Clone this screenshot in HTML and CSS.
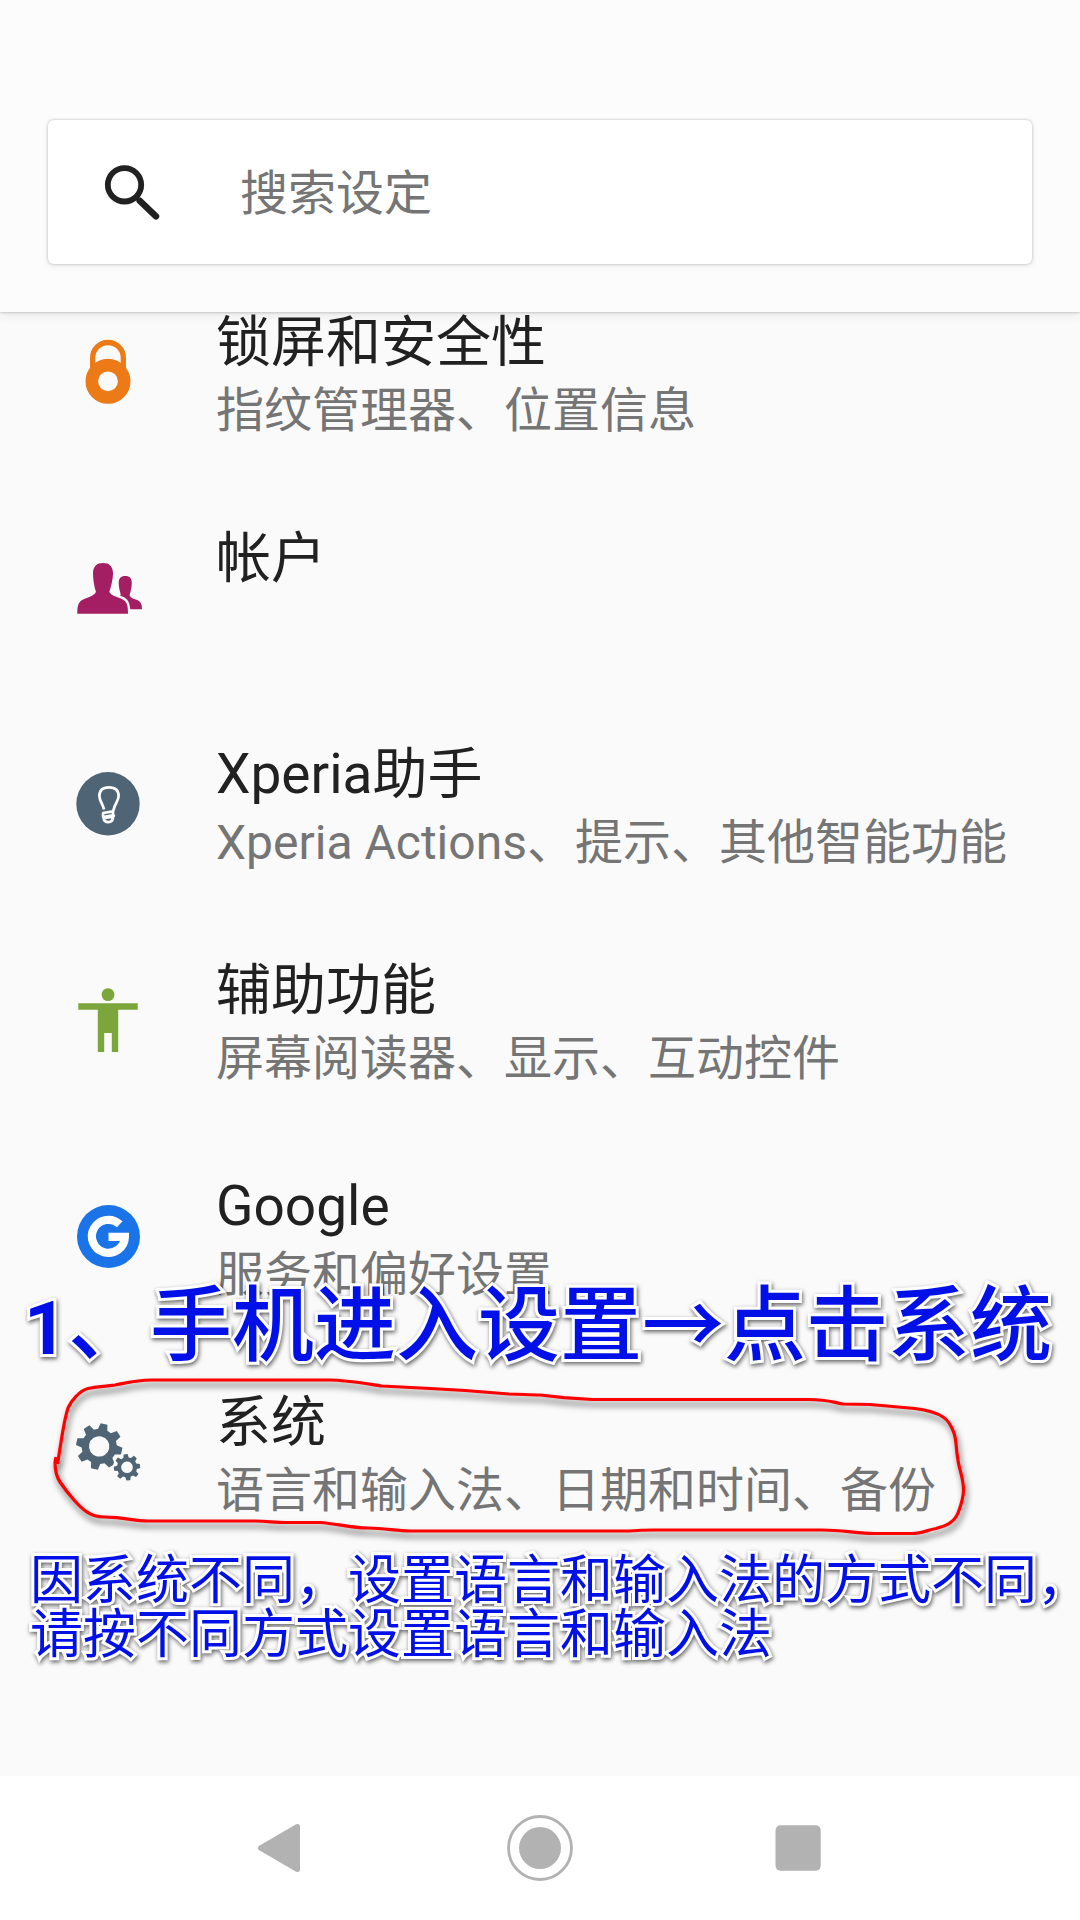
FILE: index.html
```html
<!DOCTYPE html>
<html lang="zh-CN">
<head>
<meta charset="utf-8">
<title>设置</title>
<link rel="stylesheet" href="styles.css">
</head>
<body>
<div class="screen">
  <header class="header">
    <div class="search">
      <svg class="search-icon" viewBox="0 0 60 60"><circle cx="22.5" cy="22.8" r="16.7" fill="none" stroke="#212121" stroke-width="5.8"/><path d="M37.6 38.6 54 54.4" stroke="#212121" stroke-width="6.4" stroke-linecap="round"/></svg>
      <span class="search-text">搜索设定</span>
    </div>
  </header>

  <main class="content">
    <ul class="list">
      <li class="row">
        <svg class="icon" viewBox="0 0 72 72"><path d="M20.7 36V21.5a15.3 15 0 0 1 30.6 0V36" fill="none" stroke="#ec7b17" stroke-width="5.3"/><circle cx="36" cy="45.3" r="16.2" fill="none" stroke="#ec7b17" stroke-width="12.6"/></svg>
        <div class="text"><div class="title">锁屏和安全性</div><div class="sub">指纹管理器、位置信息</div></div>
      </li>
      <li class="row">
        <svg class="icon" viewBox="0 0 72 72" fill="#a31e62"><path d="M5.3 61.7C5.3 52 7 48.7 14 46.3c5-1.800 8.500-3.300 10-6.200C22 34 21 27 21 21.500 21 14 25 11 31 11s10 3 10 10.500c0 5.500-1.700 12.500-3.700 18.600 2 3 5 4.200 9.400 5.700 8 2.700 9.300 6 9.300 15.900z"/><path d="M53.300 24c-4.600 0-6.600 2.600-6.600 7 0 4.300 1.300 8.300 2 11.400l-.5 1.400c6 1.800 9.300 4.500 10.100 13.500H70c0-6.300-2-8.300-6.300-9.800-3.500-1.200-5.200-2-6.200-4.300 1.300-4 2.300-8.300 2.300-12.200 0-4.400-2-7-6.500-7z"/></svg>
        <div class="text"><div class="title">帐户</div></div>
      </li>
      <li class="row">
        <svg class="icon" viewBox="0 0 72 72"><circle cx="36" cy="35.800" r="31.700" fill="#4f6575"/><g fill="none" stroke="#fff" stroke-width="2.700" stroke-linejoin="round"><path d="M32 41.500c-.8-5-4.600-8.500-4.600-13.500C27.400 22 31.300 19.300 37 19.300S46.600 22 46.600 28c0 5-4.200 8.500-5 13.700l-.5 1.700-10 1.600v4l9.800-1.700c1.200-.2 1.200 1.200 0 1.400l-9.300 1.500c.4 2.500 1.700 3.900 4.700 3.900 3.200 0 4.700-1.600 4.700-5V43.500"/></g></svg>
        <div class="text"><div class="title">Xperia助手</div><div class="sub">Xperia Actions、提示、其他智能功能</div></div>
      </li>
      <li class="row">
        <svg class="icon" viewBox="0 0 72 72" fill="#7ba63b"><circle cx="36" cy="10.600" r="6.400"/><path d="M6.300 19.300h59.400v6.400H46.200V68h-6.400V49h-7.600v19h-6.400V25.700H6.300z"/></svg>
        <div class="text"><div class="title">辅助功能</div><div class="sub">屏幕阅读器、显示、互动控件</div></div>
      </li>
      <li class="row">
        <svg class="icon" viewBox="0 0 72 72"><circle cx="36.500" cy="36.500" r="31.500" fill="#1b73e8"/><path d="M47.700 24.300A16.500 16.500 0 1 0 52.900 36.800H36.500" fill="none" stroke="#fff" stroke-width="8.200"/></svg>
        <div class="text"><div class="title">Google</div><div class="sub">服务和偏好设置</div></div>
      </li>
      <li class="row">
        <svg class="icon" viewBox="0 0 72 72" fill="#4f6575">
          <defs><path id="gear" fill-rule="evenodd" d="M-3.500-23h7l1.200 6 4 1.700L14-18.700l4.800 4.800-3.500 5.200 1.700 4 6 1.200v7l-6 1.200-1.700 4 3.500 5.200-4.800 4.800-5.300-3.400-4 1.700-1.200 6h-7l-1.200-6-4-1.700-5.300 3.400-4.800-4.800 3.500-5.200-1.700-4-6-1.200v-7l6-1.200 1.700-4-3.500-5.200 4.800-4.800 5.300 3.400 4-1.700zM0-10.200a10.200 10.200 0 1 0 0 20.400 10.200 10.200 0 1 0 0-20.400z"/></defs>
          <use href="#gear" transform="translate(27.200 30.400) rotate(12)"/>
          <circle cx="55" cy="51.300" r="14" fill="#fafafa"/>
          <use href="#gear" transform="translate(55 51.300) rotate(-6) scale(.57)"/>
        </svg>
        <div class="text"><div class="title">系统</div><div class="sub">语言和输入法、日期和时间、备份</div></div>
      </li>
    </ul>
  </main>

  <nav class="nav">
    <svg class="nav-icon" viewBox="0 0 72 72"><path d="M14.500 36 51.500 14.500v43z" fill="#b2b2b2" stroke="#b2b2b2" stroke-width="5" stroke-linejoin="round"/></svg>
    <svg class="nav-icon" viewBox="0 0 72 72"><circle cx="36" cy="36" r="31.500" fill="none" stroke="#b2b2b2" stroke-width="2.800"/><circle cx="36" cy="36" r="21" fill="#b2b2b2"/></svg>
    <svg class="nav-icon" viewBox="0 0 72 72"><rect x="13.500" y="13.300" width="45.200" height="45.400" rx="5" fill="#b2b2b2"/></svg>
  </nav>

  <svg class="marker" viewBox="0 1360 1080 200"><path d="M56 1457 55 1462C55 1470 56 1476 60 1482Q66 1491 74 1500C82 1509 90 1517 104 1517L117 1517.700C130 1519 138 1521 148 1521L255 1521C270 1521.500 275 1522.500 286 1522.500L320 1522.500C337 1523.500 350 1528 368 1528 385 1528 396 1531 410 1531L629 1531Q642 1530 654 1530L822 1530C842 1530 858 1533.500 874 1533.500L912 1533.500C922 1533.500 927 1530 936 1528.500 945 1526 954 1523 958 1513 961 1505 963.500 1499 963.500 1490 963.500 1478 959 1469 958 1460 956 1450 956.500 1440 954 1433 951 1425 948 1420 943 1417 936 1412 926 1410 915 1408.500L870 1404.500 843 1404C833 1402.500 829 1399.500 808 1399.500L592 1399.500 564 1397.700 540 1395C530 1394.500 520 1394.500 509 1394L465 1390.500 430 1388.500 382 1386C368 1384 346 1380 330 1380L151 1380C137 1380 128 1382.500 115 1385 105 1386.500 96 1386.500 88 1388.500 79 1391 71 1401 68 1408 65 1417 63 1430 61.500 1439L57.500 1464"/></svg>
  <div class="note note-main"><span class="num">1</span>、手机进入设置→点击系统</div>
  <div class="note note-small">因系统不同，设置语言和输入法的方式不同，<br>请按不同方式设置语言和输入法</div>
</div>
</body>
</html>
```
FILE: styles.css
```css
* { box-sizing: border-box; }
body { margin: 0; }
.screen {
  position: relative;
  width: 1080px;
  height: 1920px;
  display: flex;
  flex-direction: column;
  overflow: hidden;
  background: #fafafa;
  color: #212121;
  font-family: Roboto, "Noto Sans CJK SC", sans-serif;
}
.header {
  height: 312px;
  padding: 120px 48px 48px;
  background: #fcfcfc;
  box-shadow: 0 1px 2px rgba(0, 0, 0, .17), 0 3px 10px rgba(0, 0, 0, .08);
  z-index: 1;
}
.search {
  height: 144px;
  padding-left: 54px;
  display: flex;
  align-items: center;
  background: #fff;
  border-radius: 6px;
  box-shadow: 0 0 3px rgba(0, 0, 0, .26), 0 2px 6px rgba(0, 0, 0, .08);
}
.search-icon { width: 60px; height: 60px; }
.search-text {
  padding: 3px 0 0 78px;
  font-size: 48px;
  line-height: 66px;
  color: #757575;
}
.content { flex: 1; overflow: hidden; }
.list { margin: -48px 0 0; padding: 0; list-style: none; }
.row { height: 216px; padding-left: 72px; display: flex; align-items: center; }
.icon { width: 72px; height: 72px; flex: none; }
.text { align-self: flex-start; padding: 42px 0 0 72px; white-space: nowrap; }
.title { font-size: 55px; line-height: 73px; }
.sub { font-size: 48px; line-height: 63px; color: #757575; }
.nav {
  height: 144px;
  padding: 0 246px;
  display: flex;
  align-items: center;
  justify-content: space-between;
  background: #fff;
}
.nav-icon { width: 72px; height: 72px; }
.marker {
  position: absolute;
  left: 0;
  top: 1360px;
  width: 1080px;
  height: 200px;
  fill: none;
  stroke: #f00;
  stroke-width: 3.2;
  stroke-linejoin: round;
  filter: drop-shadow(2px 5px 3px rgba(0, 0, 0, .6));
}
.note {
  position: absolute;
  white-space: nowrap;
  color: #0010e6;
  font-family: "Noto Sans CJK SC", sans-serif;
  paint-order: stroke fill;
  -webkit-text-stroke: 6px #fff;
  stroke-linejoin: round;
  filter: drop-shadow(1px 2px 2px rgba(0, 0, 0, .6));
}
.note-main { left: 24px; top: 1269px; font-size: 82px; line-height: 100px; font-weight: 500; }
.num {
  display: inline-block;
  width: 44px;
  font-family: Roboto, sans-serif;
  font-size: 75px;
  font-weight: 700;
}
.note-small { left: 30px; top: 1549px; font-size: 53px; line-height: 54px; font-weight: 400; }
```
